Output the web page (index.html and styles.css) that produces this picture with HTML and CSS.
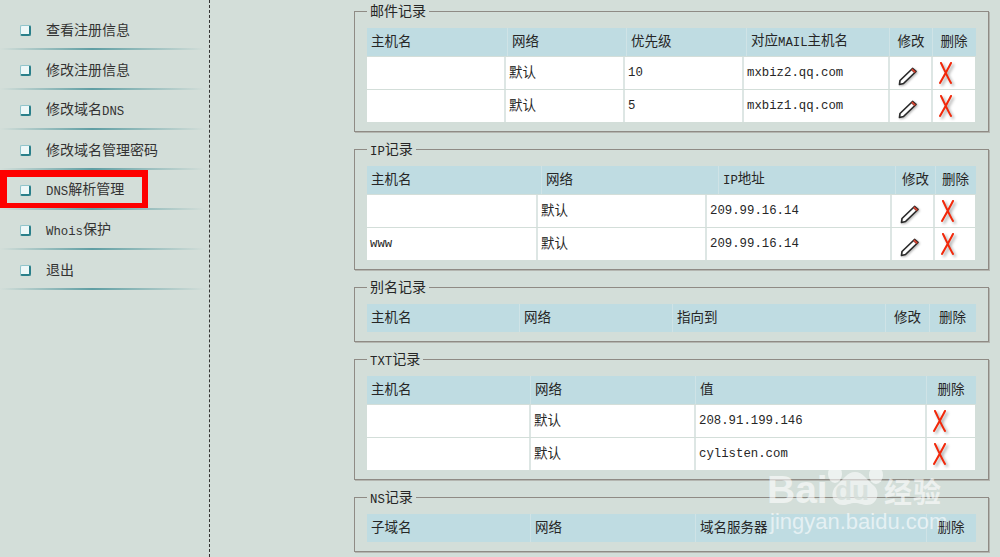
FILE: index.html
```html
<!DOCTYPE html>
<html lang="zh-CN">
<head>
<meta charset="utf-8">
<title>DNS解析管理</title>
<link rel="stylesheet" href="styles.css">
</head>
<body>
<svg class="defs" width="0" height="0" aria-hidden="true">
  <symbol id="pencil" viewBox="0 0 22 20">
    <path d="M2.5 18.5 L3 14.5 L15.5 2.5 L19 5.5 L6.5 17.5 Z" fill="#fff" stroke="#2a2a2a" stroke-width="1.7" stroke-linejoin="round"/>
    <path d="M15.5 2.5 L19 5.5 L17.6 6.9 L14.2 3.8 Z" fill="#e8452f" stroke="#6b2a22" stroke-width=".8"/>
  </symbol>
  <symbol id="cross" viewBox="0 0 20 22">
    <path d="M3 1 C6 7 9 14 13 21 M13 1 C10 7 6 14 2 21" stroke="#f2280a" stroke-width="2" fill="none" stroke-linecap="round"/>
  </symbol>
</svg>

<nav class="sidebar">
  <a class="item"><i class="bullet"></i><span class="mix">查看注册信息</span></a>
  <a class="item"><i class="bullet"></i><span class="mix">修改注册信息</span></a>
  <a class="item"><i class="bullet"></i><span class="mix">修改域名<span class="lat">DNS</span></span></a>
  <a class="item"><i class="bullet"></i><span class="mix">修改域名管理密码</span></a>
  <a class="item marked"><i class="bullet"></i><span class="mix"><span class="lat">DNS</span>解析管理</span></a>
  <a class="item"><i class="bullet"></i><span class="mix"><span class="lat">Whois</span>保护</span></a>
  <a class="item"><i class="bullet"></i><span class="mix">退出</span></a>
</nav>

<main class="main">
  <fieldset class="box">
    <legend class="mix">邮件记录</legend>
    <div class="tbl mail">
      <div class="hd"><span>主机名</span><span>网络</span><span>优先级</span><span><b class="mix">对应<span class="lat">MAIL</span>主机名</b></span><span class="c">修改</span><span class="c">删除</span></div>
      <div class="row"><span></span><span>默认</span><span><em class="lat">10</em></span><span><em class="lat">mxbiz2.qq.com</em></span><span class="ed"><svg><use href="#pencil"/></svg></span><span class="del"><svg><use href="#cross"/></svg></span></div>
      <div class="row"><span></span><span>默认</span><span><em class="lat">5</em></span><span><em class="lat">mxbiz1.qq.com</em></span><span class="ed"><svg><use href="#pencil"/></svg></span><span class="del"><svg><use href="#cross"/></svg></span></div>
    </div>
  </fieldset>

  <fieldset class="box">
    <legend class="mix"><span class="lat">IP</span>记录</legend>
    <div class="tbl ip">
      <div class="hd"><span>主机名</span><span>网络</span><span><b class="mix"><span class="lat">IP</span>地址</b></span><span class="c">修改</span><span class="c">删除</span></div>
      <div class="row"><span></span><span>默认</span><span><em class="lat">209.99.16.14</em></span><span class="ed"><svg><use href="#pencil"/></svg></span><span class="del"><svg><use href="#cross"/></svg></span></div>
      <div class="row"><span><em class="lat">www</em></span><span>默认</span><span><em class="lat">209.99.16.14</em></span><span class="ed"><svg><use href="#pencil"/></svg></span><span class="del"><svg><use href="#cross"/></svg></span></div>
    </div>
  </fieldset>

  <fieldset class="box">
    <legend class="mix">别名记录</legend>
    <div class="tbl alias">
      <div class="hd"><span>主机名</span><span>网络</span><span>指向到</span><span class="c">修改</span><span class="c">删除</span></div>
    </div>
  </fieldset>

  <fieldset class="box">
    <legend class="mix"><span class="lat">TXT</span>记录</legend>
    <div class="tbl txt">
      <div class="hd"><span>主机名</span><span>网络</span><span>值</span><span class="c">删除</span></div>
      <div class="row"><span></span><span>默认</span><span><em class="lat">208.91.199.146</em></span><span class="del"><svg><use href="#cross"/></svg></span></div>
      <div class="row"><span></span><span>默认</span><span><em class="lat">cylisten.com</em></span><span class="del"><svg><use href="#cross"/></svg></span></div>
    </div>
  </fieldset>

  <fieldset class="box">
    <legend class="mix"><span class="lat">NS</span>记录</legend>
    <div class="tbl txt">
      <div class="hd"><span>子域名</span><span>网络</span><span>域名服务器</span><span class="c">删除</span></div>
    </div>
  </fieldset>
</main>

<div class="mark">
  <svg class="paw" viewBox="0 0 70 62">
    <ellipse cx="9" cy="27" rx="7" ry="9" fill="#fff" fill-opacity=".6"/>
    <ellipse cx="22" cy="13" rx="6" ry="8.5" fill="none" stroke="#fff" stroke-opacity=".65" stroke-width="2.4"/>
    <ellipse cx="37" cy="13" rx="6" ry="8.5" fill="none" stroke="#fff" stroke-opacity=".65" stroke-width="2.4"/>
    <ellipse cx="50" cy="28" rx="7" ry="9" fill="#fff" fill-opacity=".6"/>
    <path d="M29 25 C37 25 41 33 47 38 C55 44 52 58 41 58 C36 58 34 56 29 56 C24 56 22 58 17 58 C6 58 3 45 11 38 C17 33 21 25 29 25 Z" fill="#fff" fill-opacity=".55"/>
  </svg>
  <span class="mk-bai">Bai</span>
  <span class="mk-du">du</span>
  <span class="mk-jy">经验</span>
  <span class="mk-url">jingyan.baidu.com</span>
</div>
</body>
</html>
```

FILE: styles.css
```css
* , *::before, *::after { box-sizing: border-box; }
html, body { height: 100%; }
body {
  margin: 0;
  display: flex;
  overflow: hidden;
  position: relative;
  background: #d3ded9;
  color: #262626;
  font: 13.5px/20px "Noto Sans CJK SC", sans-serif;
}
.defs { position: absolute; }
.lat { font-family: "Liberation Mono", "Noto Sans CJK SC", monospace; font-size: 12.33px; font-style: normal; }
.mix { font-weight: 400; }
.mix .lat { position: relative; top: 1px; }

/* sidebar */
.sidebar {
  flex: 0 0 210px;
  padding-top: 10px;
  border-right: 1px dashed #333;
}
.item {
  position: relative;
  display: flex;
  align-items: center;
  height: 40px;
  padding-left: 20px;
  font-size: 14px;
  color: #333;
}
.item .mix { margin-bottom: 2px; }
.item::after {
  content: "";
  position: absolute;
  left: 0; right: 4px; bottom: 0;
  height: 2px;
  background: linear-gradient(90deg, #d3ded9 0, #5f9ea3 45%, #7fb0b2 60%, #d3ded9 100%);
}
.bullet {
  width: 11px;
  height: 11px;
  margin-right: 15px;
  background: #eef8f8;
  border: 1px solid #8fc4cb;
  border-right: 2px solid #2a7f8a;
  border-bottom: 2px solid #2a7f8a;
  border-radius: 2px;
}
.marked::before {
  content: "";
  position: absolute;
  left: 0; top: 0; bottom: 1px;
  width: 148px;
  border: solid #fe0000;
  border-width: 7px 6px 6px 7px;
}

/* main */
.main {
  flex: 1;
  padding: 1px 11px 0 144px;
}
.box {
  margin: 0 0 7px;
  padding: 7px 12px 9px;
  min-width: 0;
  border: 1px solid #8f8b85;
  box-shadow: 1px 1px 0 #b4b6b0;
}
legend {
  height: 20px;
  padding: 0 3px;
  line-height: 18px;
  font-size: 14px;
}
.tbl { display: flex; flex-direction: column; gap: 1px; }
.hd, .row { display: grid; grid-template-rows: 100%; }
.hd { height: 28px; background: #bfdce2; }
.row { height: 32px; }
.hd > span {
  display: flex;
  align-items: center;
  padding: 0 0 4px 4px;
  border-right: 1px solid #cfe3e6;
  white-space: nowrap;
}
.hd > span:last-child { border-right: 0; }
.hd > .c { justify-content: center; padding-left: 0; }
.hd b { line-height: 20px; }
.row > span {
  display: flex;
  align-items: center;
  padding: 0 0 4px 3px;
  background: #fff;
  border-right: 2px solid #dde6e4;
}
.row > span:last-child { border-right: 0; }
.row em { margin-top: 4px; }
.row > .ed { padding: 6px 0 0 7px; }
.row > .del { padding: 0 0 0 5px; }
.ed svg { width: 22px; height: 20px; filter: drop-shadow(1px 1px 1px rgba(0, 0, 0, .3)); }
.del svg { width: 20px; height: 22px; filter: drop-shadow(2px 2px 1.5px rgba(0, 0, 0, .35)); }

.mail .hd { grid-template-columns: 141px 119px 120px 143px 43px 42px; }
.mail .row { grid-template-columns: 139px 119px 119px 146px 43px 42px; }
.ip .hd { grid-template-columns: 175px 177px 177px 40px 39px; }
.ip .row { grid-template-columns: 171px 169px 185px 43px 40px; }
.alias .hd { grid-template-columns: 153px 153px 213px 44px 45px; }
.txt .hd, .txt .row { grid-template-columns: 164px 165px 231px 48px; }

/* watermark */
.mark {
  position: absolute;
  left: 765px;
  top: 445px;
  width: 185px;
  height: 95px;
  color: rgba(255, 255, 255, .6);
  font-family: "Liberation Sans", sans-serif;
}
.paw { position: absolute; left: 61px; top: 2px; width: 70px; height: 62px; }
.mk-bai { position: absolute; left: 2px; top: 23px; font: bold 39px/44px "Liberation Sans", sans-serif; }
.mk-du { position: absolute; left: 70px; top: 31px; font: bold 28px/30px "Liberation Sans", sans-serif; color: rgba(211, 222, 217, .8); }
.mk-jy { position: absolute; left: 119px; top: 30px; font: bold 28px/32px "Noto Sans CJK SC", sans-serif; letter-spacing: 1px; }
.mk-url { position: absolute; left: 5px; top: 62px; font: 22px/30px "Liberation Sans", sans-serif; white-space: nowrap; }
```
